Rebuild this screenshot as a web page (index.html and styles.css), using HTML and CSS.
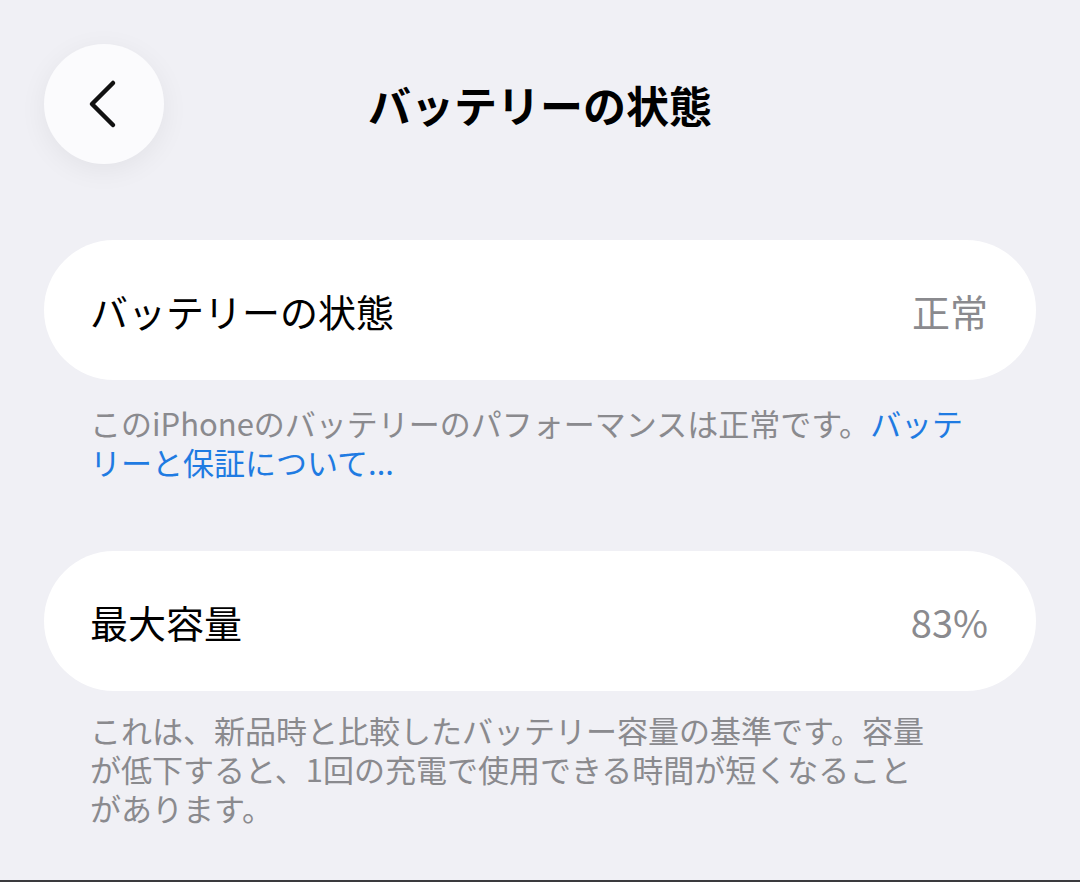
FILE: index.html
```html
<!DOCTYPE html>
<html lang="ja">
<head>
    <meta charset="UTF-8">
    <meta name="viewport" content="width=device-width, initial-scale=1.0">
    <title>バッテリーの状態</title>
    <link rel="stylesheet" href="styles.css">
</head>
<body>

<div class="page">
    <div class="nav-bar">
        <button class="back-btn" aria-label="戻る">
            <svg width="30" height="50" viewBox="0 0 30 50">
                <path d="M26 4 L5 25 L26 46" fill="none" stroke="#111" stroke-width="4.5" stroke-linecap="round" stroke-linejoin="round"/>
            </svg>
        </button>
        <h1>バッテリーの状態</h1>
        <div></div>
    </div>

    <div class="row-card first">
        <span class="label">バッテリーの状態</span>
        <span class="value">正常</span>
    </div>
    <p class="footnote note-first">このiPhoneのバッテリーのパフォーマンスは正常です。<a href="#">バッテ<br>リーと保証について...</a></p>

    <div class="row-card">
        <span class="label">最大容量</span>
        <span class="value">83%</span>
    </div>
    <p class="footnote">これは、新品時と比較したバッテリー容量の基準です。容量<br>が低下すると、1回の充電で使用できる時間が短くなること<br>があります。</p>

    <div class="bottom-line"></div>
</div>

</body>
</html>
```

FILE: styles.css
```css
body {
    margin: 0;
    background-color: #f0f0f5;
    font-family: "Noto Sans CJK JP", "Noto Sans", sans-serif;
    color: #000;
}

.page {
    height: 100vh;
    display: flex;
    flex-direction: column;
    box-sizing: border-box;
    padding: 44px 44px 0;
}

.nav-bar {
    display: grid;
    grid-template-columns: 120px 1fr 120px;
    align-items: center;
    height: 120px;
}

.back-btn {
    width: 120px;
    height: 120px;
    border-radius: 50%;
    border: none;
    background: #fbfbfd;
    box-shadow: 0 6px 28px rgba(0, 0, 0, 0.06);
    display: flex;
    align-items: center;
    justify-content: center;
    padding: 0 4px 0 0;
    cursor: pointer;
}

h1 {
    margin: 0;
    text-align: center;
    font-size: 43px;
    font-weight: 700;
    letter-spacing: 0;
}

.row-card {
    height: 140px;
    border-radius: 70px;
    background: #fff;
    display: flex;
    align-items: center;
    justify-content: space-between;
    padding: 0 48px 0 46px;
    font-size: 38px;
}

.row-card.first {
    margin-top: 76px;
}

.row-card .value {
    color: #8a8a8e;
}

.footnote {
    margin: 19px 0 0;
    padding-left: 46px;
    font-size: 31px;
    line-height: 39px;
    color: #8a8a8e;
}

.footnote.note-first {
    margin-top: 23px;
    margin-bottom: 70px;
}

.footnote a {
    color: #1f7be2;
    text-decoration: none;
}

.bottom-line {
    margin: auto -44px 0;
    height: 2px;
    background: #3a3a3e;
}
```
